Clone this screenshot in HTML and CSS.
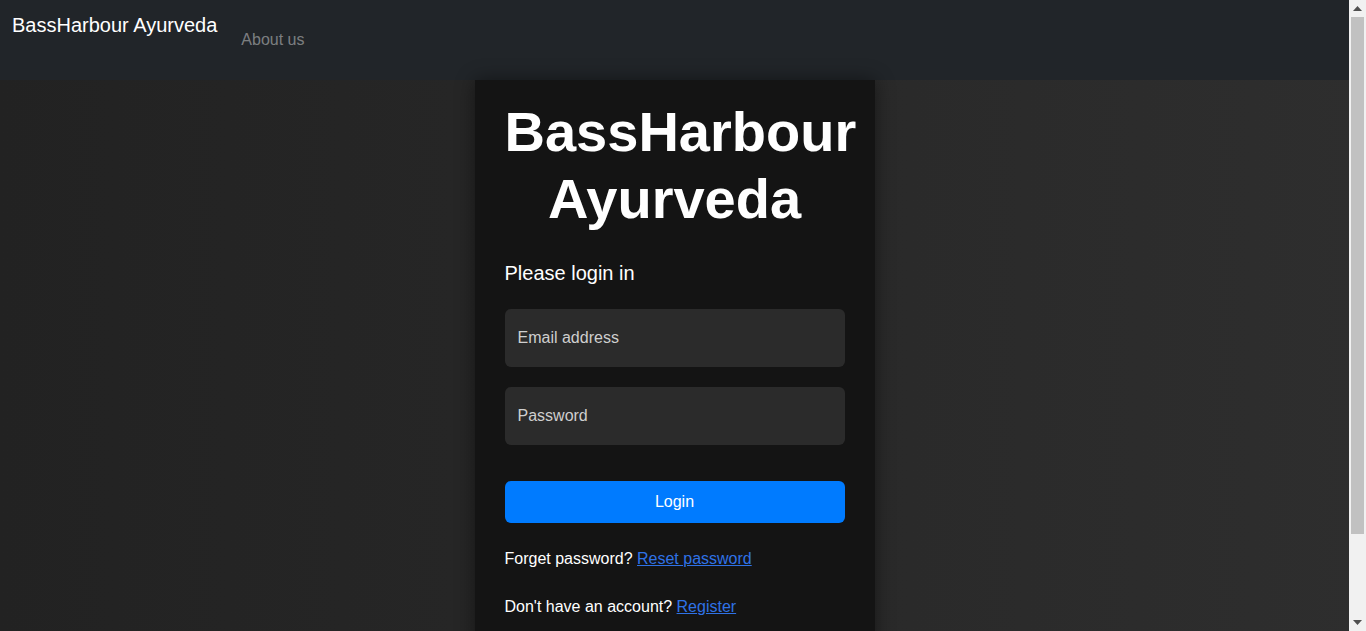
FILE: index.html
```html
<!DOCTYPE html>
<html lang="en">
<head>
<meta charset="utf-8">
<title>BassHarbour Ayurveda</title>
<link rel="stylesheet" href="styles.css">
</head>
<body>
<nav class="navbar">
  <a class="brand" href="#">BassHarbour Ayurveda</a>
  <a class="nav-link" href="#">About us</a>
</nav>
<main class="page">
  <section class="card">
    <h1 class="title">BassHarbour Ayurveda</h1>
    <h4 class="subtitle">Please login in</h4>
    <form class="form">
      <input class="field" type="email" placeholder="Email address">
      <input class="field" type="password" placeholder="Password">
      <button class="btn" type="button">Login</button>
    </form>
    <p class="note first">Forget password? <a href="#">Reset password</a></p>
    <p class="note">Don't have an account? <a href="#">Register</a></p>
  </section>
</main>
<div class="scrollbar" aria-hidden="true">
  <div class="sb-btn">
    <svg width="9" height="5" viewBox="0 0 9 5"><polygon points="4.5,0 9,5 0,5" fill="#505050"/></svg>
  </div>
  <div class="sb-track"><div class="sb-thumb"></div></div>
  <div class="sb-btn">
    <svg width="9" height="5" viewBox="0 0 9 5"><polygon points="0,0 9,0 4.5,5" fill="#505050"/></svg>
  </div>
</div>
</body>
</html>
```

FILE: styles.css
```css
html, body {
  margin: 0;
  padding: 0;
}
body {
  font-family: "Liberation Sans", Arial, sans-serif;
  color: #fff;
  background: linear-gradient(to right, #222222, #2e2e2e);
  min-height: 100vh;
  margin-right: 17px;
}
.navbar {
  height: 80px;
  box-sizing: border-box;
  background: #212529;
  display: flex;
  align-items: flex-start;
  padding: 0 12px;
}
.brand {
  color: #fff;
  text-decoration: none;
  font-size: 20px;
  line-height: 30px;
  padding-top: 10px;
  margin-right: 16px;
}
.nav-link {
  color: rgba(255, 255, 255, 0.42);
  text-decoration: none;
  font-size: 16px;
  line-height: 24px;
  padding: 28px 8px 0;
}
.page {
  display: flex;
  justify-content: center;
}
.card {
  width: 400px;
  box-sizing: border-box;
  min-height: 650px;
  background: #141414;
  padding: 18px 30px 30px;
  box-shadow: 0 0 18px rgba(0, 0, 0, 0.45);
}
.title {
  margin: 0;
  font-size: 56px;
  line-height: 1.2;
  font-weight: 700;
  text-align: center;
}
.subtitle {
  margin: 29px 0 24px;
  font-size: 20px;
  line-height: 24px;
  font-weight: 400;
}
.form {
  display: flex;
  flex-direction: column;
}
.field {
  height: 58px;
  box-sizing: border-box;
  border: none;
  border-radius: 6px;
  background: #2b2b2b;
  color: #fff;
  font-family: inherit;
  font-size: 16px;
  padding: 0 13px;
  margin-bottom: 20px;
  outline: none;
}
.field::placeholder {
  color: #cfcfcf;
  opacity: 1;
}
.field + .field {
  margin-bottom: 36px;
}
.btn {
  height: 42px;
  border: none;
  border-radius: 6px;
  background: #007bff;
  color: #fff;
  font-family: inherit;
  font-size: 16px;
  cursor: pointer;
}
.note {
  margin: 24px 0 0;
  font-size: 16px;
  line-height: 24px;
}
.note.first {
  margin-top: 24px;
}
.note a {
  color: #2f72e6;
  text-decoration: underline;
}
.scrollbar {
  position: fixed;
  top: 0;
  right: 0;
  width: 17px;
  height: 100vh;
  background: #f1f1f1;
  display: flex;
  flex-direction: column;
}
.sb-btn {
  height: 17px;
  display: flex;
  align-items: center;
  justify-content: center;
  flex: none;
}
.sb-track {
  flex: 1;
  padding: 0 2px;
}
.sb-thumb {
  height: 517px;
  background: #c1c1c1;
}
```
